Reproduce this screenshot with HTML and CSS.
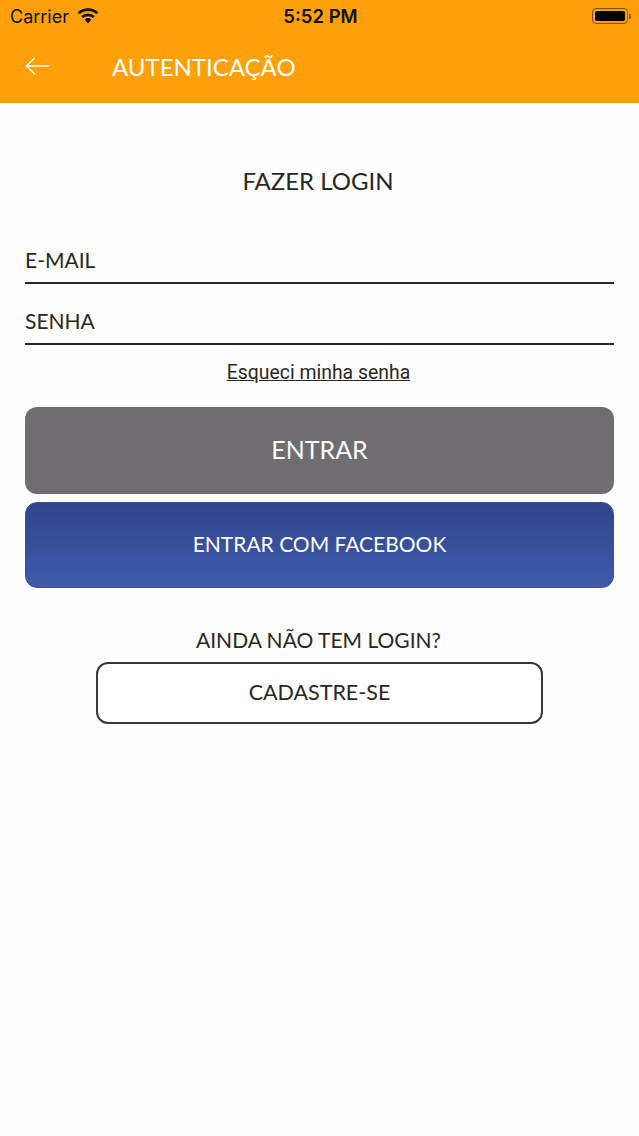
FILE: index.html
```html
<!DOCTYPE html>
<html lang="pt">
<head>
    <meta charset="UTF-8">
    <meta name="viewport" content="width=device-width, initial-scale=1.0">
    <title>Autenticação</title>
    <link rel="stylesheet" href="styles.css">
</head>
<body>
    <header class="top">
        <div class="status-bar">
            <div class="status-left">
                <span>Carrier</span>
                <svg class="wifi" width="22" height="16" viewBox="0.5 0 23 17">
                    <path d="M12 16.5l-3.6-4.3a5.6 5.6 0 0 1 7.2 0z" fill="#111"/>
                    <path d="M5.8 9.6a9.4 9.4 0 0 1 12.4 0M2 5.6a15 15 0 0 1 20 0" fill="none" stroke="#111" stroke-width="3"/>
                </svg>
            </div>
            <div class="status-time">5:52 PM</div>
            <div class="status-right">
                <div class="battery"><div class="battery-fill"></div></div>
                <div class="battery-tip"></div>
            </div>
        </div>
        <div class="title-bar">
            <svg class="back" width="24" height="18" viewBox="0 0 24 18">
                <path d="M24 9H1.5M9.5 1L1.5 9l8 8" fill="none" stroke="#fff" stroke-width="1.5"/>
            </svg>
            <h1>AUTENTICAÇÃO</h1>
        </div>
    </header>

    <main class="content">
        <h2>FAZER LOGIN</h2>
        <form class="login-form">
            <div class="field">E-MAIL</div>
            <div class="field">SENHA</div>
            <a class="forgot" href="#">Esqueci minha senha</a>
            <button type="button" class="btn btn-login">ENTRAR</button>
            <button type="button" class="btn btn-facebook">ENTRAR COM FACEBOOK</button>
        </form>
        <p class="no-login">AINDA NÃO TEM LOGIN?</p>
        <button type="button" class="btn-register">CADASTRE-SE</button>
    </main>
</body>
</html>
```

FILE: styles.css
```css
body {
    font-family: "Lato", "Liberation Sans", sans-serif;
    background-color: #fefefe;
    color: #2a2622;
    margin: 0;
}

.top {
    background-color: #ff9f0a;
    height: 103px;
}

.status-bar {
    display: grid;
    grid-template-columns: 1fr auto 1fr;
    align-items: center;
    height: 32px;
    padding: 0 8px 0 10px;
    color: #111;
    font-family: "Inter", sans-serif;
}

.status-left {
    display: flex;
    align-items: center;
    gap: 8px;
    font-size: 18px;
}

.status-time {
    font-size: 18.5px;
    font-weight: 600;
}

.status-right {
    display: flex;
    align-items: center;
    justify-content: flex-end;
    gap: 1px;
}

.battery {
    width: 36px;
    height: 16px;
    box-sizing: border-box;
    padding: 2px;
    border: 1px solid #7a5508;
    border-radius: 4px;
}

.battery-fill {
    height: 100%;
    background-color: #000;
    border-radius: 2px;
}

.battery-tip {
    width: 2px;
    height: 5px;
    background-color: #8a5f08;
}

.title-bar {
    display: flex;
    align-items: center;
    height: 68px;
    padding-left: 25px;
}

.title-bar h1 {
    margin: 0 0 0 63px;
    color: #fff;
    font-size: 24px;
    font-weight: 400;
}

.content {
    display: flex;
    flex-direction: column;
    align-items: center;
    padding: 0 25px;
}

.content h2 {
    margin: 63px 3px 0 0;
    font-size: 24px;
    font-weight: 400;
    line-height: 30px;
}

.login-form {
    display: flex;
    flex-direction: column;
    width: 100%;
    margin-top: 45px;
}

.field {
    height: 43px;
    margin-top: 18px;
    box-sizing: border-box;
    padding-top: 6px;
    border-bottom: 2px solid #2a2622;
    font-size: 21px;
    line-height: 26px;
}

.login-form .field:first-child {
    margin-top: 0;
}

.forgot {
    align-self: center;
    margin: 16px 2px 0 0;
    color: #2a2622;
    font-family: "Roboto", sans-serif;
    font-size: 19.4px;
    line-height: 24px;
}

.btn {
    height: 87px;
    padding-bottom: 4px;
    border-radius: 12px;
    color: #fff;
    font-family: inherit;
}

.btn-login {
    margin-top: 22px;
    border: none;
    background-color: #6f6d70;
    font-size: 25px;
}

.btn-facebook {
    height: 86px;
    margin-top: 8px;
    border: 1px solid #34539f;
    background: linear-gradient(#2f4589, #3e5bab);
    font-size: 21px;
}

.no-login {
    margin: 39px 2px 0 0;
    font-size: 21px;
    line-height: 26px;
}

.btn-register {
    width: 447px;
    height: 62px;
    margin-top: 9px;
    padding-bottom: 4px;
    border: 2px solid #3a3632;
    border-radius: 12px;
    background-color: #fff;
    color: #2a2622;
    font-family: inherit;
    font-size: 21.5px;
}
```
